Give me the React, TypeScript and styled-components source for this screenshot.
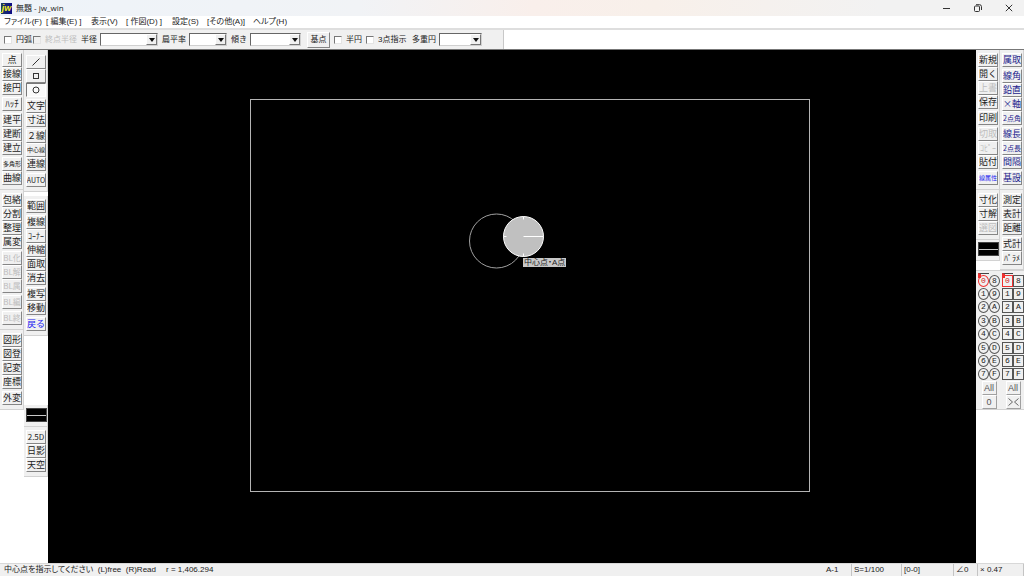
import React from "react";
import styled, { createGlobalStyle, css } from "styled-components";

const Global = createGlobalStyle`
  *, *::before, *::after { box-sizing: border-box; }
  html, body, #root { height: 100%; margin: 0; }
  body {
    background: #fff;
    color: #222;
    font-family: "Liberation Sans", "Noto Sans CJK JP", sans-serif;
    font-size: 8px;
    line-height: 12px;
    overflow: hidden;
  }
  button, select, input { font: inherit; color: inherit; margin: 0; padding: 0; }
`;

const Window = styled.div`
  display: flex;
  flex-direction: column;
  height: 100vh;
`;

const TitleBar = styled.header`
  display: flex;
  align-items: center;
  height: 16px;
  flex: none;
  padding-left: 1px;
  background: linear-gradient(90deg, #eef3f9 0%, #f1f3f6 35%, #f9efeb 52%, #f8f0ea 64%, #f2f2f2 86%);
`;

const AppIcon = styled.span`
  width: 11px;
  height: 11px;
  margin-right: 4px;
  background: linear-gradient(90deg, #1d3c64, #0a0a86);
  color: #f5ee20;
  font: italic bold 9px/10px "Liberation Sans", sans-serif;
  text-align: center;
`;

const Title = styled.h1`
  flex: 1;
  margin: 0;
  font: 400 8px/12px "Open Sans", "Noto Sans CJK JP", sans-serif;
`;

const WindowButton = styled.button`
  display: grid;
  place-items: center;
  width: 31px;
  height: 16px;
  border: 0;
  background: none;
`;

const MenuBar = styled.nav`
  display: flex;
  align-items: center;
  height: 14px;
  flex: none;
  padding: 0 0 1px 4px;
  border-bottom: 2px solid #dedede;
`;

const MenuItem = styled.button<{ $w: number }>`
  width: ${(p) => p.$w}px;
  border: 0;
  background: none;
  text-align: left;
  white-space: pre;
  font-feature-settings: "palt";
`;

const OptionRow = styled.div`
  flex: none;
  height: 20px;
  border-bottom: 1px solid #777;
`;

const OptionBar = styled.div`
  display: flex;
  align-items: center;
  width: 504px;
  height: 19px;
  padding-left: 4px;
  background: #f0f0f0;
  border-right: 1px solid #c8c8c8;
`;

const Check = styled.label<{ $w: number; $off?: boolean }>`
  display: flex;
  align-items: center;
  gap: 4px;
  width: ${(p) => p.$w}px;
  white-space: nowrap;
  color: ${(p) => (p.$off ? "#bdbdbd" : "#222")};
`;

const Tick = styled.input`
  appearance: none;
  flex: none;
  width: 8px;
  height: 8px;
  border: 1px solid;
  border-color: #777 #e4e4e4 #e4e4e4 #777;
  background: #fff;
  &:disabled { background: #f0f0f0; }
`;

const Field = styled.label`
  display: flex;
  align-items: center;
  gap: 3px;
  margin-right: 4px;
  white-space: nowrap;
`;

const Combo = styled.span<{ $w: number }>`
  display: flex;
  width: ${(p) => p.$w}px;
  height: 13px;
  border: 1px solid;
  border-color: #666 #d0d0d0 #d0d0d0 #666;
  background: #fff;
`;

const Select = styled.select`
  appearance: none;
  flex: 1;
  min-width: 0;
  border: 0;
  background: #fff;
`;

const Arrow = styled.span`
  display: grid;
  place-items: center;
  width: 11px;
  height: 11px;
  background: #f0f0f0;
  border: 1px solid;
  border-color: #fff #777 #777 #fff;
`;

const raised = css`
  border: 1px solid;
  border-color: #fff #858585 #858585 #fff;
  background: #f0f0f0;
`;

const BaseButton = styled.button`
  ${raised}
  width: 23px;
  height: 16px;
  margin: 0 4px 0 2px;
  line-height: 12px;
`;

const Body = styled.div`
  display: flex;
  flex: 1;
  min-height: 0;
`;

const Side = styled.aside`
  display: flex;
  align-items: flex-start;
  flex: none;
  width: 48px;
  background: #fff;
`;

const Column = styled.div`
  width: 24px;
  flex: none;
`;

const Bar = styled.div<{ $top?: number; $pad?: number }>`
  display: flex;
  flex-direction: column;
  gap: 2px;
  margin-top: ${(p) => p.$top ?? 0}px;
  padding: ${(p) => p.$pad ?? 3}px 2px 4px;
  background: #f0f0f0;
  border-right: 1px solid #d2d2d2;
  border-bottom: 1px solid #d2d2d2;
`;

const Group = styled.div`
  display: flex;
  flex-direction: column;
`;

const tones = { ink: "#222", off: "#bdbdbd", navy: "#1a1a8c", blue: "#2020f0" };
type Tone = keyof typeof tones;

const Tool = styled.button<{ $tone: Tone; $size: number; $down: boolean }>`
  ${raised}
  display: flex;
  align-items: center;
  justify-content: center;
  width: 20px;
  height: 14px;
  overflow: hidden;
  white-space: nowrap;
  font-family: "Noto Sans CJK JP", sans-serif;
  font-size: ${(p) => p.$size}px;
  line-height: 12px;
  color: ${(p) => tones[p.$tone]};
  ${(p) => p.$down && css`
    border-color: #777 #fff #fff #777;
    background: #fafafa;
  `}
`;

const LineStyle = styled.button`
  display: flex;
  align-items: center;
  width: 21px;
  height: 14px;
  border: 1px solid #444;
  background: #000;
  &::before {
    content: "";
    flex: 1;
    height: 1px;
    background: #c8c8c8;
  }
`;

const Canvas = styled.main`
  position: relative;
  flex: 1;
  min-width: 0;
  background: #000;
  overflow: hidden;
`;

const Drawing = styled.svg`
  display: block;
  width: 100%;
  height: 100%;
`;

const Hint = styled.div`
  position: absolute;
  left: 475px;
  top: 208px;
  height: 9px;
  padding: 0 1px;
  background: #c8c8c8;
  line-height: 9px;
  white-space: nowrap;
  font-feature-settings: "palt";
`;

const LayerBar = styled.div<{ $top: number }>`
  margin-top: ${(p) => p.$top}px;
  padding: 3px 0 0 2px;
  height: 140px;
  background: #f0f0f0;
  border-top: 1px solid #d2d2d2;
  border-bottom: 1px solid #d2d2d2;
`;

const LayerGrid = styled.div`
  display: grid;
  grid-template-columns: 11px 11px;
  grid-template-rows: repeat(8, 1fr);
  height: 107px;
`;

const Layer = styled.button<{ $round: boolean; $active: boolean }>`
  position: relative;
  place-self: center;
  width: 11px;
  height: 12px;
  border: 1px solid #555;
  border-radius: ${(p) => (p.$round ? "50%" : "0")};
  background: #f0f0f0;
  font: 8px/10px "Liberation Mono", monospace;
  ${(p) => p.$active && css`
    border-color: #f03030;
    color: #d02020;
    &::before {
      content: "";
      position: absolute;
      left: -1px;
      top: -3px;
      width: 11px;
      height: 5px;
      border-top: 1px solid #444;
      border-left: 3px solid #f03030;
    }
  `}
`;

const LayerFoot = styled.div`
  display: flex;
  flex-direction: column;
  align-items: center;
`;

const LayerButton = styled.button`
  ${raised}
  display: grid;
  place-items: center;
  width: 15px;
  height: 14px;
  border-color: #fff #a0a0a0 #a0a0a0 #fff;
  font-size: 9px;
  line-height: 12px;
  color: #555;
`;

const StatusBar = styled.footer`
  display: flex;
  align-items: center;
  flex: none;
  height: 13px;
  padding-left: 4px;
  background: #f0f0f0;
  border-top: 1px solid #d8d8d8;
  white-space: pre;
`;

const Message = styled.span`
  width: 162px;
  font-feature-settings: "palt";
`;

const Radius = styled.span`
  flex: 1;
`;

const StatusCell = styled.button<{ $w: number }>`
  width: ${(p) => p.$w}px;
  height: 12px;
  padding-left: 2px;
  border: 0;
  border-right: 1px solid #c4c4c4;
  background: none;
  text-align: left;
  white-space: nowrap;
`;

type Item = { t: React.ReactNode; name?: string; tone?: Tone; size?: number; down?: boolean };
type Entry = string | Item;

const off = (t: string, size = 9): Item => ({ t, tone: "off", size });
const navy = (t: string, size = 9): Item => ({ t, tone: "navy", size });
const small = (t: string, size = 8): Item => ({ t, size });

const shape = (child: React.ReactNode) => (
  <svg width="10" height="10" viewBox="0 0 10 10" fill="none" stroke="#333">{child}</svg>
);

const leftA: Entry[][][] = [
  [["点", "接線", "接円"], ["ﾊｯﾁ"], ["建平", "建断", "建立"], [small("多角形", 6), "曲線"]],
  [["包絡", "分割", "整理", "属変"], [off("BL化", 8), off("BL解", 8), off("BL属", 8)], [off("BL編", 8)], [off("BL終", 8)]],
  [["図形", "図登", "記変", "座標"], ["外変"]],
];

const leftB1: Entry[][] = [
  [
    { t: shape(<path d="M1.5 8.5 8.5 1.5" />), name: "線" },
    { t: shape(<rect x="2.5" y="2.5" width="5" height="5" />), name: "矩形" },
    { t: shape(<circle cx="5" cy="5" r="3" />), name: "円弧", down: true },
  ],
  ["文字", "寸法"],
  ["２線", small("中心線", 6), "連線"],
  [small("AUTO", 7)],
];
const leftB2: Entry[][] = [
  ["範囲"],
  ["複線", small("ｺｰﾅｰ"), "伸縮", "面取", "消去"],
  ["複写", "移動"],
  [{ t: "戻る", tone: "blue" }],
];
const leftB3: Entry[][] = [[small("2.5D"), "日影", "天空"]];

const rightA: Entry[][][] = [
  [["新規", "開く", off("上書"), "保存"], ["印刷"], [off("切取"), off("ｺﾋﾟｰ", 8), "貼付"], [{ t: "線属性", tone: "blue", size: 6 }]],
  [["寸化", "寸解", off("選図")]],
];
const rightB: Entry[][][] = [
  [
    [navy("属取")],
    [navy("線角"), navy("鉛直"), navy("×軸"), navy("2点角", 7)],
    [navy("線長"), navy("2点長", 7), navy("間隔")],
    [navy("基設")],
  ],
  [["測定", "表計", "距離"], ["式計", small("ﾊﾟﾗﾒ")]],
];

function Tools({ groups, top, pad }: { groups: Entry[][]; top?: number; pad?: number }) {
  return (
    <Bar $top={top} $pad={pad}>
      {groups.map((group, i) => (
        <Group key={i}>
          {group.map((entry, j) => {
            const item: Item = typeof entry === "string" ? { t: entry } : entry;
            return (
              <Tool
                key={j}
                aria-label={item.name}
                disabled={item.tone === "off"}
                $tone={item.tone ?? "ink"}
                $size={item.size ?? 9}
                $down={!!item.down}
              >
                {item.t}
              </Tool>
            );
          })}
        </Group>
      ))}
    </Bar>
  );
}

function Layers({ round, top, last }: { round: boolean; top: number; last: React.ReactNode }) {
  return (
    <LayerBar $top={top}>
      <LayerGrid>
        {["0", "8", "1", "9", "2", "A", "3", "B", "4", "C", "5", "D", "6", "E", "7", "F"].map((n) => (
          <Layer key={n} $round={round} $active={n === "0"}>{n}</Layer>
        ))}
      </LayerGrid>
      <LayerFoot>
        <LayerButton>All</LayerButton>
        {last}
      </LayerFoot>
    </LayerBar>
  );
}

function Dropdown({ label, w }: { label: string; w: number }) {
  return (
    <Field>
      {label}
      <Combo $w={w}>
        <Select><option></option></Select>
        <Arrow><svg width="6" height="4" viewBox="0 0 6 4"><path d="M0 0h6L3 4z" fill="#111" /></svg></Arrow>
      </Combo>
    </Field>
  );
}

const menus: [string, number][] = [
  ["ファイル(F)", 42], ["[ 編集(E) ]", 45], ["表示(V)", 35], ["[ 作図(D) ]", 46],
  ["設定(S)", 35], ["[その他(A)]", 46], ["ヘルプ(H)", 40],
];

export default function App() {
  return (
    <Window>
      <Global />
      <TitleBar>
        <AppIcon>jw</AppIcon>
        <Title>無題 - jw_win</Title>
        <WindowButton aria-label="最小化">
          <svg width="8" height="8" viewBox="0 0 8 8" stroke="#333"><path d="M0 4.5h7" /></svg>
        </WindowButton>
        <WindowButton aria-label="元に戻す">
          <svg width="8" height="8" viewBox="0 0 8 8" fill="none" stroke="#333">
            <rect x="0.5" y="2" width="5" height="5.5" rx="1" />
            <path d="M2 .7h3.5a2 2 0 0 1 2 2V6" />
          </svg>
        </WindowButton>
        <WindowButton aria-label="閉じる">
          <svg width="8" height="8" viewBox="0 0 8 8" stroke="#333"><path d="M.8.8l6.4 6.4M7.2.8.8 7.2" /></svg>
        </WindowButton>
      </TitleBar>
      <MenuBar>
        {menus.map(([t, w]) => <MenuItem key={t} $w={w}>{t}</MenuItem>)}
      </MenuBar>
      <OptionRow>
        <OptionBar>
          <Check $w={29}><Tick type="checkbox" />円弧</Check>
          <Check $w={48} $off><Tick type="checkbox" disabled />終点半径</Check>
          <Dropdown label="半径" w={58} />
          <Dropdown label="扁平率" w={38} />
          <Dropdown label="傾き" w={51} />
          <BaseButton>基点</BaseButton>
          <Check $w={32}><Tick type="checkbox" />半円</Check>
          <Check $w={46}><Tick type="checkbox" />3点指示</Check>
          <Dropdown label="多重円" w={43} />
        </OptionBar>
      </OptionRow>
      <Body>
        <Side>
          <Column>
            {leftA.map((g, i) => <Tools key={i} groups={g} />)}
          </Column>
          <Column>
            <Tools groups={leftB1} pad={5} />
            <Tools groups={leftB2} top={4} />
            <Bar $top={69}><LineStyle aria-label="線属性" /></Bar>
            <Tools groups={leftB3} />
          </Column>
        </Side>
        <Canvas>
          <Drawing fill="none">
            <rect x="202.5" y="49.5" width="559" height="392" stroke="#b4b4b4" />
            <circle cx="448.5" cy="191" r="27" stroke="#a0a0a0" />
            <circle cx="475.5" cy="186.5" r="20" fill="#c0c0c0" stroke="#fff" />
            <path d="M475.5 186.5h20M455.5 186.5h3M475.5 166.5v3M475.5 206.5v-3" stroke="#fff" />
          </Drawing>
          <Hint>中心点・A点</Hint>
        </Canvas>
        <Side>
          <Column>
            {rightA.map((g, i) => <Tools key={i} groups={g} />)}
            <Bar $pad={2}><LineStyle aria-label="線属性" /></Bar>
            <Layers round top={9} last={<LayerButton>0</LayerButton>} />
          </Column>
          <Column>
            {rightB.map((g, i) => <Tools key={i} groups={g} />)}
            <Layers
              round={false}
              top={0}
              last={
                <LayerButton aria-label="レイヤ反転">
                  <svg width="11" height="8" viewBox="0 0 11 8" fill="none" stroke="#666"><path d="M.5.5 4.5 4 .5 7.5M10.5.5 6.5 4l4 3.5" /></svg>
                </LayerButton>
              }
            />
          </Column>
        </Side>
      </Body>
      <StatusBar>
        <Message>中心点を指示してください  (L)free  (R)Read</Message>
        <Radius>r = 1,406.294</Radius>
        <StatusCell $w={28}>A-1</StatusCell>
        <StatusCell $w={50}>S=1/100</StatusCell>
        <StatusCell $w={52}>[0-0]</StatusCell>
        <StatusCell $w={24}>∠0</StatusCell>
        <StatusCell $w={46}>× 0.47</StatusCell>
      </StatusBar>
    </Window>
  );
}
